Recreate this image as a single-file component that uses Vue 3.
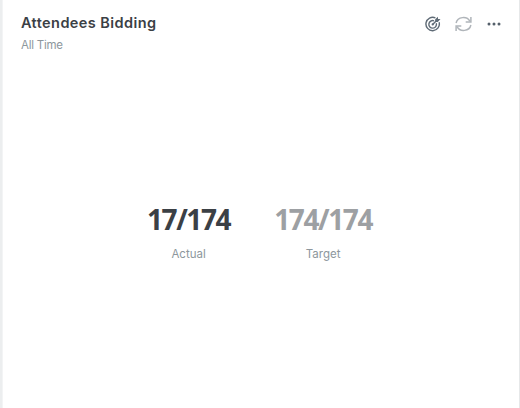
<template>
  <div class="page">
    <section class="widget">
      <header class="widget-header">
        <div class="heading">
          <h3 class="title">{{ title }}</h3>
          <p class="period">{{ period }}</p>
        </div>
        <div class="actions">
          <button class="icon-btn target" aria-label="Target">
            <svg width="16" height="16" viewBox="0 0 16 16" fill="none" stroke="currentColor">
              <path d="M10.4 1.9A6.7 6.7 0 1 0 14.1 6.2" stroke-width="1.4" />
              <path d="M9 4.8A3.8 3.8 0 1 0 11.3 7.3" stroke-width="1.4" />
              <path d="M7.7 8.4 12 4" stroke-width="1.4" />
              <path d="M10.2 5.9V3.3L13 .7v2.3h2.5l-2.7 2.9z" fill="currentColor" stroke="none" />
              <circle cx="7.7" cy="8.4" r="1.1" fill="currentColor" stroke="none" />
            </svg>
          </button>
          <button class="icon-btn refresh" aria-label="Refresh">
            <svg width="17" height="16" viewBox="0 0 17 16" fill="none" stroke="currentColor" stroke-width="1.5">
              <path d="M1.1 7A7.4 6.8 0 0 1 15 5.4" />
              <path d="M15.9 .9v5h-5.2" />
              <path d="M15.9 9A7.4 6.8 0 0 1 2 10.6" />
              <path d="M1.1 15.1v-5h5.2" />
            </svg>
          </button>
          <button class="icon-btn more" aria-label="More">
            <svg width="14" height="4" viewBox="0 0 14 4" fill="currentColor">
              <circle v-for="cx in [2, 7, 12]" :key="cx" :cx="cx" cy="2" r="1.5" />
            </svg>
          </button>
        </div>
      </header>
      <div class="stats">
        <div v-for="stat in stats" :key="stat.label" class="stat" :class="stat.type">
          <span class="value">{{ stat.value }}</span>
          <span class="label">{{ stat.label }}</span>
        </div>
      </div>
    </section>
  </div>
</template>

<script setup>
const title = 'Attendees Bidding';
const period = 'All Time';

const stats = [
  { type: 'actual', value: '17/174', label: 'Actual' },
  { type: 'goal', value: '174/174', label: 'Target' },
];
</script>

<style>
body {
  margin: 0;
  overflow: hidden;
}
</style>

<style scoped>
.page {
  box-sizing: border-box;
  height: 408px;
  padding-left: 2px;
  background: #eceeef;
  font-family: Inter, 'Liberation Sans', sans-serif;
}
.widget {
  box-sizing: border-box;
  height: 100%;
  background: #fff;
  border-left: 1px solid #f3f4f5;
  border-right: 1px solid #e6e8e9;
}
.widget-header {
  display: flex;
  justify-content: space-between;
  height: 60px;
  padding: 13px 18px 0;
  box-sizing: border-box;
}
.title {
  margin: 0;
  font-size: 14.5px;
  line-height: 20px;
  font-weight: 600;
  letter-spacing: 0.42px;
  color: #3b4045;
}
.period {
  margin: 4px 0 0;
  font-size: 11.5px;
  line-height: 17px;
  letter-spacing: -0.25px;
  color: #8d979d;
}
.actions {
  display: flex;
  align-items: center;
  height: 21px;
  gap: 14px;
}
.icon-btn {
  display: flex;
  padding: 0;
  border: none;
  background: none;
  cursor: pointer;
}
.target {
  color: #5f6b76;
}
.refresh {
  color: #b0b5ba;
}
.more {
  margin-left: 1px;
  color: #55606b;
}
.stats {
  display: flex;
  justify-content: center;
  gap: 44px;
  padding: 142px 3px 0 0;
}
.stat {
  display: flex;
  flex-direction: column;
  align-items: center;
}
.value {
  font-family: 'Open Sans', 'Liberation Sans', sans-serif;
  font-size: 28px;
  line-height: 34px;
  font-weight: 700;
  letter-spacing: -1.4px;
  color: #3b4045;
}
.goal .value {
  color: #9da0a3;
}
.label {
  margin-top: 10px;
  font-size: 11.5px;
  line-height: 17px;
  color: #8d979d;
}
</style>
